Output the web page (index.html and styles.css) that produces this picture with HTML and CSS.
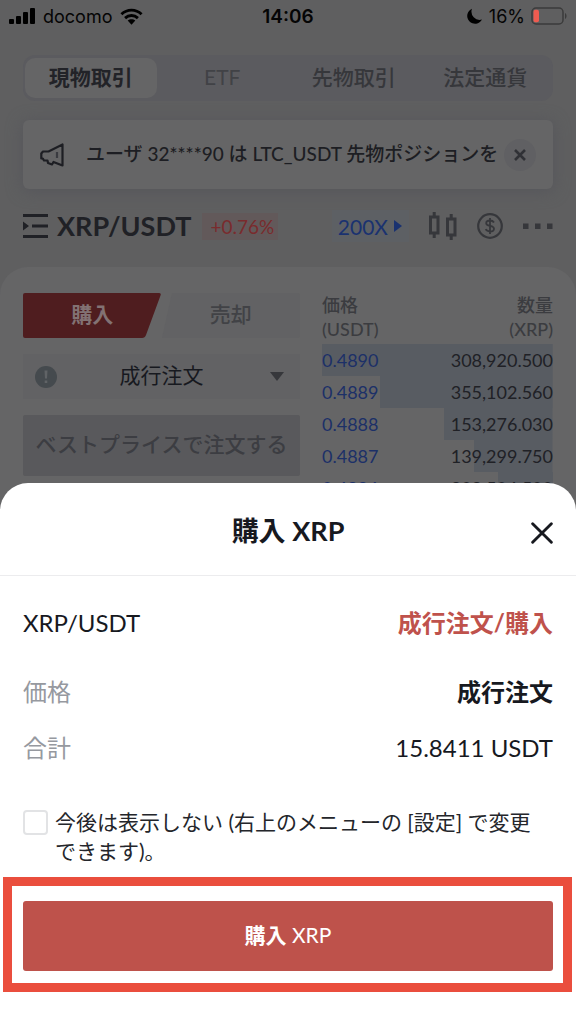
FILE: index.html
```html
<!DOCTYPE html>
<html lang="ja">
<head>
<meta charset="utf-8">
<meta name="viewport" content="width=device-width, initial-scale=1">
<title>購入 XRP</title>
<link rel="stylesheet" href="styles.css">
</head>
<body>
<div class="screen">
  <header class="status">
    <div class="status-side">
      <svg class="signal" viewBox="0 0 26 17" aria-hidden="true"><rect x="0" y="11" width="5" height="5" rx="1"/><rect x="7" y="8" width="5" height="8" rx="1"/><rect x="14" y="4" width="5" height="12" rx="1"/><rect x="21" y="0" width="5" height="16" rx="1"/></svg>
      <span>docomo</span>
      <svg class="wifi" viewBox="0 0 24 17" aria-hidden="true"><g fill="none" stroke="#000" stroke-width="3"><path d="M1.500 6.200C7.500 .4 16.500 .4 22.500 6.200"/><path d="M5.300 10.200c3.900-3.700 9.500-3.700 13.400 0"/></g><path d="M12 17l-4-4.200c2.400-2 5.600-2 8 0z"/></svg>
    </div>
    <time class="clock">14:06</time>
    <div class="status-side status-right">
      <svg class="moon" viewBox="0 0 16 16" aria-hidden="true"><path d="M5 .8A7.800 7.800 0 1 0 15 11.500 8.200 8.200 0 0 1 5 .8z"/></svg>
      <span class="percent">16%</span>
      <svg class="battery" viewBox="0 0 36 18" aria-hidden="true"><rect x="1" y="1" width="31" height="16" rx="4" fill="none" stroke="#3b3b3b" stroke-width="1.500"/><rect x="2.500" y="2.800" width="5.500" height="12.400" rx="2" fill="#ee5b50"/><path d="M34 6c2 .8 2 5.200 0 6z" fill="#3b3b3b"/></svg>
    </div>
  </header>

  <main class="market">
    <nav class="modes">
      <button class="mode mode-on">現物取引</button>
      <button class="mode">ETF</button>
      <button class="mode mode-strong">先物取引</button>
      <button class="mode mode-strong">法定通貨</button>
    </nav>

    <section class="notice">
      <svg class="horn" viewBox="0 0 24 24" fill="none" stroke="#1d1e23" stroke-width="2.200" stroke-linejoin="round" aria-hidden="true"><path d="M22.500 1.500v21l-9-3.500-1.500 2.500-4-1.500-.5-2.500H4L2.800 15.500H1.300V10.500L3 8.500h5.500z"/><path d="M17 9v6" stroke="#3a3b40"/></svg>
      <p class="notice-text">ユーザ 32****90 は LTC_USDT 先物ポジションを</p>
      <button class="notice-close" aria-label="閉じる"><svg viewBox="0 0 12 12" aria-hidden="true"><path d="M1 1l10 10m0-10l-10 10" stroke="#303136" stroke-width="2.600"/></svg></button>
    </section>

    <section class="pair">
      <svg class="list" viewBox="0 0 25 24" aria-hidden="true"><path d="M0 0h25v3H0zM9 10.500h16v3H9zM0 21h25v3H0zM0 7.500l6 4.500-6 4.500z"/></svg>
      <h1 class="pair-name">XRP/USDT</h1>
      <span class="change">+0.76%</span>
      <button class="leverage">200X<svg viewBox="0 0 8 12" aria-hidden="true"><path d="M0 0l8 6-8 6z"/></svg></button>
      <button class="tool" aria-label="チャート"><svg class="candles" viewBox="0 0 28 28" fill="none" stroke="#36373b" stroke-width="3" aria-hidden="true"><path d="M1.500 5h7.500v16H1.500zM5.200 0v5m0 16v5M18.500 7H26v16h-7.500zM22.200 2v5m0 16v5"/></svg></button>
      <button class="tool" aria-label="通貨"><svg class="coin" viewBox="0 0 26 26" fill="none" stroke="#36373b" aria-hidden="true"><circle cx="13" cy="13" r="11.800" stroke-width="2.200"/><path d="M17 9.500C16 7.800 14.500 7.500 13 7.500c-2.200 0-3.800 1-3.800 2.700 0 3.800 7.800 1.700 7.800 5.500 0 1.800-1.700 2.800-4 2.800-2 0-3.500-.7-4.300-2.300M13 5v16" stroke-width="1.800"/></svg></button>
      <button class="tool" aria-label="メニュー"><svg class="dots" viewBox="0 0 30 6" fill="#36373b" aria-hidden="true"><path d="M0 .5h5.500V6H0zM12 .5h5.500V6H12zM24 .5h5.500V6H24z"/></svg></button>
    </section>

    <section class="trade">
      <div class="order">
        <div class="sides">
          <svg class="sides-shape" viewBox="0 0 277 45" preserveAspectRatio="none" aria-hidden="true"><path d="M2 0h134q2.500 0 1.500 2.500L123 42q-1 3-4 3H2q-2 0-2-2V2q0-2 2-2z" fill="#4f1d1f"/><path d="M149 0h126q2 0 2 2v41q0 2-2 2H139z" fill="#626264"/></svg>
          <button class="side side-buy">購入</button>
          <button class="side">売却</button>
        </div>
        <div class="kind">
          <svg class="info" viewBox="0 0 22 22" aria-hidden="true"><circle cx="11" cy="11" r="11" fill="#454a4e"/><path d="M9.500 4.500h3l-.5 8h-2zM9.700 14.500h2.600V17H9.700z" fill="#606366"/></svg>
          <select class="kind-select" aria-label="注文タイプ"><option>成行注文</option></select>
          <svg class="arrow" viewBox="0 0 14 9" aria-hidden="true"><path d="M0 0h14L7 9z"/></svg>
        </div>
        <button class="best">ベストプライスで注文する</button>
      </div>
      <table class="book">
        <thead><tr><th>価格<br>(USDT)</th><th>数量<br>(XRP)</th></tr></thead>
        <tbody>
          <tr class="depth-full"><td>0.4890</td><td>308,920.500</td></tr>
          <tr class="depth-high"><td>0.4889</td><td>355,102.560</td></tr>
          <tr class="depth-mid"><td>0.4888</td><td>153,276.030</td></tr>
          <tr class="depth-low"><td>0.4887</td><td>139,299.750</td></tr>
          <tr class="depth-min"><td>0.4886</td><td>208,504.500</td></tr>
        </tbody>
      </table>
    </section>
  </main>

  <section class="sheet" role="dialog" aria-labelledby="sheet-title">
    <header class="sheet-head">
      <h2 class="sheet-title" id="sheet-title">購入 XRP</h2>
      <button class="sheet-close" aria-label="閉じる"><svg viewBox="0 0 20 20" aria-hidden="true"><path d="M1.500 1.500l17 17m0-17l-17 17" stroke="#17191f" stroke-width="2.600" stroke-linecap="round"/></svg></button>
    </header>
    <dl class="details">
      <div class="detail detail-pair"><dt>XRP/USDT</dt><dd>成行注文/購入</dd></div>
      <div class="detail"><dt>価格</dt><dd class="strong">成行注文</dd></div>
      <div class="detail"><dt>合計</dt><dd>15.8411 USDT</dd></div>
    </dl>
    <label class="skip"><input class="skip-box" type="checkbox"><span>今後は表示しない (右上のメニューの [設定] で変更できます)。</span></label>
    <div class="frame"><button class="confirm"><b>購入</b> XRP</button></div>
  </section>
</div>
</body>
</html>
```
FILE: styles.css
```css
* { box-sizing: border-box; margin: 0; }
body { font-family: Lato, "Noto Sans CJK JP", sans-serif; color: #17191f; }
button, select { font: inherit; color: inherit; border: 0; background: none; padding: 0; }
svg { display: block; flex: none; }

.screen { position: relative; height: 100vh; overflow: hidden; background: #5f5f60; }

.status { display: grid; grid-template-columns: 1fr auto 1fr; align-items: center; height: 32px; padding: 0 9px; font: 18px Inter, sans-serif; color: #050505; }
.status-side { display: flex; align-items: center; gap: 8px; }
.status-right { justify-content: flex-end; gap: 6px; }
.signal { width: 26px; height: 17px; }
.wifi { width: 23px; height: 17px; }
.moon { width: 16px; height: 16px; }
.battery { width: 36px; height: 18px; }
.clock { font-weight: 600; font-size: 19px; }

.market { padding-top: 23px; }

.modes { display: grid; grid-template-columns: repeat(4, 1fr); height: 46px; margin: 0 23px; padding: 3px 2px; border-radius: 12px; background: #5b5b5f; font-size: 21px; color: #414246; }
.mode { padding-bottom: 4px; border-radius: 10px; }
.mode-strong { font-weight: 500; color: #36373b; }
.mode-on { background: #656566; font-weight: 700; color: #222328; }

.notice { display: flex; align-items: center; height: 69px; margin: 19px 23px 0; padding: 0 17px; border-radius: 6px; background: #656566; box-shadow: 0 2px 16px #55565b; }
.horn { width: 24px; height: 24px; }
.notice-text { flex: 1; margin: 0 0 0 22px; padding-bottom: 4px; white-space: nowrap; font-size: 19px; font-weight: 500; color: #1d1e23; }
.notice-close { display: grid; place-items: center; width: 32px; height: 32px; border-radius: 50%; background: #606063; }
.notice-close svg { width: 12px; height: 12px; }

.pair { display: flex; align-items: center; height: 78px; padding: 0 23px 4px; }
.list { width: 25px; height: 24px; fill: #202126; }
.pair-name { margin: 0 11px 0 9px; font-size: 27px; line-height: 36px; font-weight: 700; color: #202126; }
.change { padding: 0 4px 0 8px; line-height: 27px; font-size: 19px; color: #7a2b2d; background: #62595a; }
.leverage { display: flex; align-items: center; gap: 6px; height: 32px; margin-left: auto; padding: 0 7px 0 6px; font-size: 21px; color: #1a3270; background: #5d6064; }
.leverage svg { width: 8px; height: 12px; fill: #1a3270; }
.tool { margin-left: 20px; }
.candles { width: 28px; height: 28px; }
.coin { width: 26px; height: 26px; }
.dots { width: 30px; height: 6px; }

.trade { display: grid; grid-template-columns: 277fr 231fr; column-gap: 22px; align-items: start; padding: 26px 23px; border-radius: 28px 28px 0 0; background: #656566; }
.order { display: grid; gap: 16px; font-size: 21px; }
.sides { position: relative; display: grid; grid-template-columns: 1fr 1fr; height: 45px; }
.sides-shape { position: absolute; inset: 0; width: 100%; height: 100%; }
.side { position: relative; padding-bottom: 6px; font-weight: 500; color: #414246; }
.side-buy { font-weight: 700; color: #827273; }
.kind { position: relative; height: 45px; background: #626264; }
.kind-select { width: 100%; height: 100%; padding-bottom: 4px; appearance: none; text-align: center; text-align-last: center; color: #17191f; }
.info { position: absolute; left: 12px; top: 12px; width: 22px; height: 22px; }
.arrow { position: absolute; right: 16px; top: 18px; width: 14px; height: 9px; fill: #36373b; }
.best { height: 61px; padding-bottom: 6px; border-radius: 2px; background: #59595c; color: #3c3d42; font-weight: 500; white-space: nowrap; }

.book { width: 100%; border-collapse: collapse; font-size: 18px; color: #202126; }
.book th { height: 51px; padding: 0; vertical-align: top; text-align: left; font-weight: 500; line-height: 24px; color: #3b3c40; }
.book th + th, .book td + td { text-align: right; }
.book td { height: 32px; padding: 0; color: #202126; }
.book td:first-child { color: #1c3068; }
.book tbody tr { background: linear-gradient(#585c62, #585c62) right / 100% 100% no-repeat; }
.book .depth-high { background-size: 75% 100%; }
.book .depth-mid { background-size: 47% 100%; }
.book .depth-low { background-size: 34% 100%; }
.book .depth-min { background-size: 24% 100%; }

.sheet { position: absolute; left: 0; right: 0; bottom: 0; padding-bottom: 32px; border-radius: 28px 28px 0 0; background: #fff; }
.sheet-head { display: grid; grid-template-columns: 1fr auto 1fr; align-items: center; height: 93px; padding: 4px 23px 0; border-bottom: 1px solid #ececee; }
.sheet-title { grid-column: 2; padding-bottom: 4px; font-size: 27px; font-weight: 700; }
.sheet-close { justify-self: end; padding-top: 4px; }
.sheet-close svg { width: 22px; height: 22px; }
.details { padding: 27px 23px 0; font-size: 24px; line-height: 40px; }
.detail { display: flex; justify-content: space-between; margin-bottom: 16px; color: #17191f; }
.detail dt { color: #96999f; }
.detail .strong { font-weight: 700; }
.detail-pair { margin-bottom: 29px; }
.detail-pair dt { color: #17191f; }
.detail-pair dd { font-weight: 700; color: #bf524c; }
.skip { display: flex; align-items: flex-start; gap: 7px; margin: 39px 34px 12px 23px; font-size: 21px; line-height: 29px; color: #24262b; }
.skip-box { flex: none; appearance: none; width: 25px; height: 25px; margin: 3px 0 0; border: 2px solid #e2e3e5; border-radius: 4px; background: #fff; }
.frame { margin: 0 4px 0 3px; padding: 15px 10px 12px 11px; border: 9px solid #ea4e3d; }
.confirm { display: block; width: 100%; height: 70px; padding-bottom: 4px; border-radius: 3px; background: #be524b; color: #fff; font-size: 21px; }
```
